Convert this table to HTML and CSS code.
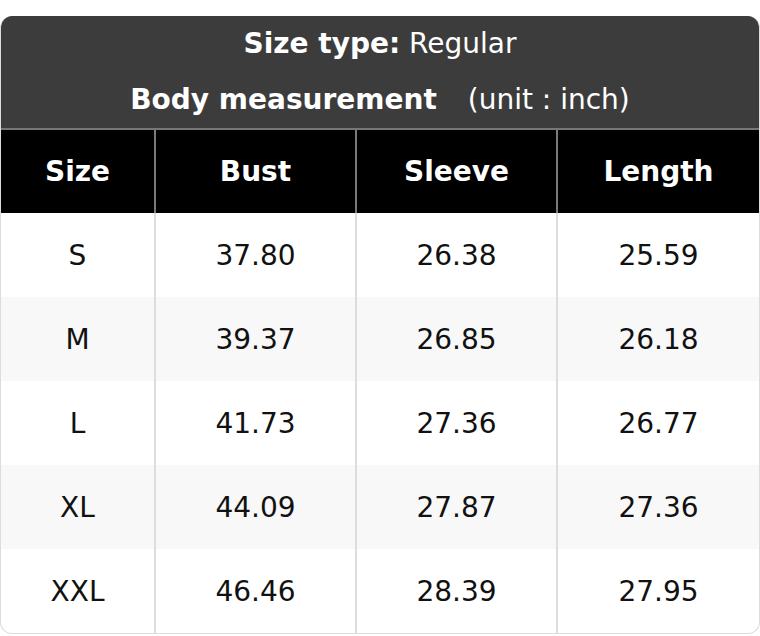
FILE: index.html
```html
<!DOCTYPE html>
<html>
<head>
<meta charset="utf-8">
<link rel="stylesheet" href="styles.css">
</head>
<body>
<div class="page">
  <div class="card">
    <div class="caption">
      <div class="line"><b>Size type:</b> Regular</div>
      <div class="line"><b>Body measurement</b><span class="unit">(unit : inch)</span></div>
    </div>
    <table class="sizes">
      <colgroup>
        <col class="c1"><col class="c2"><col class="c3"><col class="c4">
      </colgroup>
      <thead>
        <tr><th>Size</th><th>Bust</th><th>Sleeve</th><th>Length</th></tr>
      </thead>
      <tbody>
        <tr><td>S</td><td>37.80</td><td>26.38</td><td>25.59</td></tr>
        <tr><td>M</td><td>39.37</td><td>26.85</td><td>26.18</td></tr>
        <tr><td>L</td><td>41.73</td><td>27.36</td><td>26.77</td></tr>
        <tr><td>XL</td><td>44.09</td><td>27.87</td><td>27.36</td></tr>
        <tr><td>XXL</td><td>46.46</td><td>28.39</td><td>27.95</td></tr>
      </tbody>
    </table>
  </div>
</div>
</body>
</html>
```
FILE: styles.css
```css
html, body {
  margin: 0;
  padding: 0;
  background: #ffffff;
}
.page {
  padding-top: 16px;
  width: 760px;
}
.card {
  width: 760px;
  border-radius: 12px;
  overflow: hidden;
  font-family: "DejaVu Sans", sans-serif;
  font-size: 28px;
  color: #111111;
  border: 1px solid #dcdcdc;
  border-top: none;
  box-sizing: border-box;
}
.caption {
  background: #3c3c3c;
  color: #ffffff;
  text-align: center;
  border-bottom: 2px solid #777777;
}
.line {
  height: 56px;
  line-height: 56px;
}
.line b {
  font-weight: bold;
}
.unit {
  margin-left: 31px;
}
.sizes {
  width: 100%;
  table-layout: fixed;
  border-collapse: collapse;
}
.c1 { width: 154px; }
.c2 { width: 201px; }
.c3 { width: 201px; }
.c4 { width: 202px; }
.sizes th {
  background: #000000;
  color: #ffffff;
  font-weight: bold;
  height: 83px;
  padding: 0;
  text-align: center;
  border-left: 2px solid #7a7a7a;
}
.sizes td {
  height: 84px;
  padding: 0;
  text-align: center;
  border-left: 2px solid #dddddd;
}
.sizes th:first-child,
.sizes td:first-child {
  border-left: none;
}
.sizes tbody tr:nth-child(even) td {
  background: #f8f8f8;
}
```
